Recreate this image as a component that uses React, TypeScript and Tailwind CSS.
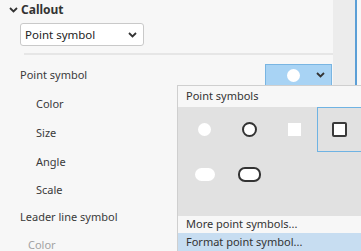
import React from 'react'

const font = { fontFamily: '"Noto Sans", "Open Sans", sans-serif' }

function Chevron({ className = '' }: { className?: string }) {
  return (
    <svg width="9" height="6" viewBox="0 0 9 6" className={className}>
      <polyline points="1,1 4.5,4.5 8,1" fill="none" stroke="#333" strokeWidth="1.8" />
    </svg>
  )
}

function Row({ label, h, indent = 'pl-5', muted = false, children }: {
  label: string; h: string; indent?: string; muted?: boolean; children?: React.ReactNode
}) {
  return (
    <div className={`flex items-center justify-between ${h} ${indent}`}>
      <span className={muted ? 'text-[#a3a3a3]' : 'text-[#3a3a3a]'}>{label}</span>
      {children}
    </div>
  )
}

type Sym = { kind: 'dot' | 'ring' | 'sq' | 'sqo' | 'pill' | 'pillo'; selected?: boolean }

const symbols: Sym[] = [
  { kind: 'dot' }, { kind: 'ring' }, { kind: 'sq' }, { kind: 'sqo', selected: true },
  { kind: 'pill' }, { kind: 'pillo' },
]

function Glyph({ kind }: { kind: Sym['kind'] }) {
  if (kind === 'dot') return <div className="w-[13px] h-[13px] rounded-full bg-white" />
  if (kind === 'ring') return <div className="w-[15px] h-[15px] rounded-full bg-white border-2 border-[#333]" />
  if (kind === 'sq') return <div className="w-[13px] h-[13px] bg-white" />
  if (kind === 'sqo') return <div className="w-[15px] h-[15px] rounded-[2px] bg-white border-2 border-[#3a3a3a]" />
  if (kind === 'pill') return <div className="w-[20px] h-[13px] rounded-full bg-white" />
  return <div className="w-[23px] h-[15px] rounded-[7px] bg-white border-2 border-[#333]" />
}

export default function App() {
  return (
    <div className="relative w-[361px] h-[251px] overflow-hidden flex bg-[#f7f7f7] text-[11px]" style={font}>
      {/* property panel */}
      <div className="w-[333px] shrink-0">
        <div className="flex items-center h-[19px] pt-[1px]">
          <Chevron className="ml-[9px] mr-[3px]" />
          <span className="font-bold text-[#333] text-[12px]">Callout</span>
        </div>
        <div className="mt-[4px] ml-5 w-[124px] h-[23px] flex items-center justify-between bg-white border border-[#c9c9c9] rounded-[3px] pl-[4px] pr-[6px]">
          <span className="text-[#222] text-[11.5px]">Point symbol</span>
          <Chevron />
        </div>
        <div className="mt-[7px] ml-[24px] h-[2px] bg-[#e6e6e6]" />
        <div className="mt-[6px]">
          <Row label="Point symbol" h="h-[28px]">
            <div className="w-[67px] h-[23px] mr-[1px] flex items-center bg-[#a8d3f4] border border-[#79b5e2]">
              <div className="ml-[21px] w-[13px] h-[13px] rounded-full bg-white" />
              <Chevron className="ml-auto mr-[6px]" />
            </div>
          </Row>
          <Row label="Color" h="h-[30px]" indent="pl-9" />
          <Row label="Size" h="h-[29px]" indent="pl-9" />
          <Row label="Angle" h="h-[29px]" indent="pl-9" />
          <Row label="Scale" h="h-[27px]" indent="pl-9" />
          <Row label="Leader line symbol" h="h-[27px]" />
          <Row label="Color" h="h-[28px]" indent="pl-7" muted />
        </div>
      </div>
      {/* scrollbar strip + splitter */}
      <div className="w-[22px] shrink-0 bg-[#ececec]" />
      <div className="w-[2px] shrink-0 bg-[#5b9fd6]" />
      <div className="flex-1 bg-[#f7f7f7]" />

      {/* gallery dropdown */}
      <div className="absolute left-[177px] top-[85px] w-[200px] bottom-0 flex flex-col bg-[#f7f7f7] border-l border-t border-[#cfcfcf]">
        <div className="h-[21px] shrink-0 flex items-center pl-[8px] text-[#333]">Point symbols</div>
        <div className="h-[109px] shrink-0 bg-[#e1e1e1] pl-[4px] grid grid-cols-[repeat(4,45px)] grid-rows-[45px_45px] content-start">
          {symbols.map((s, i) => (
            <div
              key={i}
              className={`flex items-center justify-center ${s.selected ? 'border border-[#6fb3e3]' : ''}`}
            >
              <Glyph kind={s.kind} />
            </div>
          ))}
        </div>
        <div className="h-[17px] shrink-0 flex items-center pl-[8px] text-[#333]">More point symbols...</div>
        <div className="flex-1 flex items-center pl-[8px] bg-[#c7ddf1] text-[#333]">Format point symbol...</div>
      </div>
    </div>
  )
}
